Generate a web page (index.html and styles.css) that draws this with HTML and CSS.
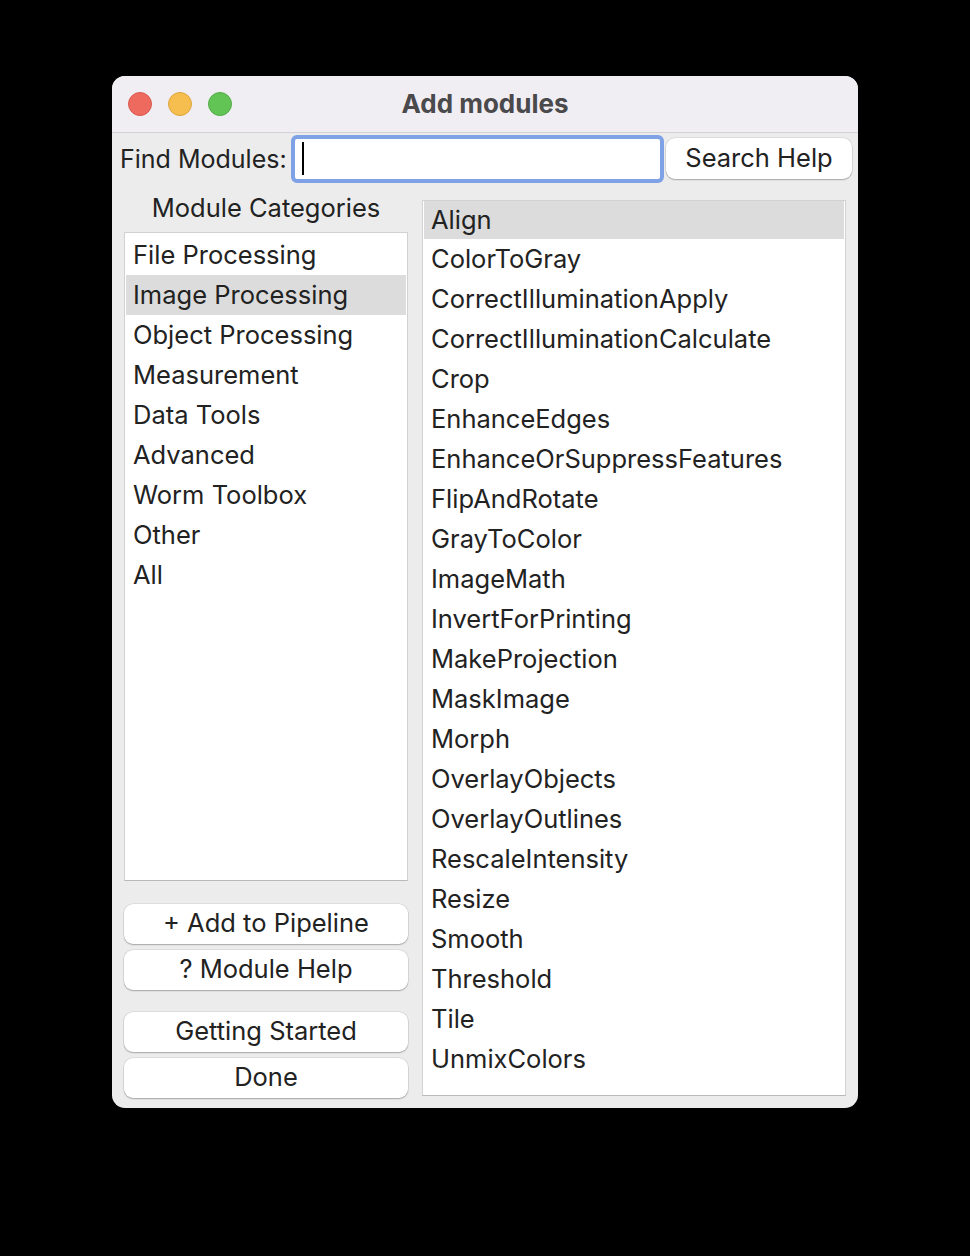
FILE: index.html
```html
<!DOCTYPE html>
<html>
<head>
<meta charset="utf-8">
<link rel="stylesheet" href="styles.css">
</head>
<body>
<div class="window">
  <div class="titlebar">
    <div class="lights">
      <span class="light red"></span>
      <span class="light yellow"></span>
      <span class="light green"></span>
    </div>
    <div class="title">Add modules</div>
    <div></div>
  </div>
  <div class="searchrow">
    <span class="label">Find Modules:</span>
    <div class="input"><span class="caret"></span></div>
    <button class="btn search">Search Help</button>
  </div>
  <div class="content">
    <div class="leftcol">
      <div class="heading">Module Categories</div>
      <ul class="list cats">
        <li>File Processing</li>
        <li class="sel">Image Processing</li>
        <li>Object Processing</li>
        <li>Measurement</li>
        <li>Data Tools</li>
        <li>Advanced</li>
        <li>Worm Toolbox</li>
        <li>Other</li>
        <li>All</li>
      </ul>
      <div class="btngroup first">
        <button class="btn">+ Add to Pipeline</button>
        <button class="btn">? Module Help</button>
      </div>
      <div class="btngroup">
        <button class="btn">Getting Started</button>
        <button class="btn">Done</button>
      </div>
    </div>
    <ul class="list mods">
      <li class="sel">Align</li>
      <li>ColorToGray</li>
      <li>CorrectIlluminationApply</li>
      <li>CorrectIlluminationCalculate</li>
      <li>Crop</li>
      <li>EnhanceEdges</li>
      <li>EnhanceOrSuppressFeatures</li>
      <li>FlipAndRotate</li>
      <li>GrayToColor</li>
      <li>ImageMath</li>
      <li>InvertForPrinting</li>
      <li>MakeProjection</li>
      <li>MaskImage</li>
      <li>Morph</li>
      <li>OverlayObjects</li>
      <li>OverlayOutlines</li>
      <li>RescaleIntensity</li>
      <li>Resize</li>
      <li>Smooth</li>
      <li>Threshold</li>
      <li>Tile</li>
      <li>UnmixColors</li>
    </ul>
  </div>
</div>
</body>
</html>
```

FILE: styles.css
```css
* { box-sizing: border-box; }
html, body { margin: 0; padding: 0; background: #000; }
body {
  width: 970px;
  height: 1256px;
  padding: 76px 0 0 112px;
  font-family: Inter, "Noto Sans", "Liberation Sans", sans-serif;
  color: #222;
}
.window {
  width: 746px;
  height: 1032px;
  background: #ececec;
  border-radius: 13px;
  overflow: hidden;
  display: flex;
  flex-direction: column;
}
.titlebar {
  height: 57px;
  flex: none;
  background: #f1eef3;
  border-bottom: 1px solid #d3d1d5;
  display: grid;
  grid-template-columns: 1fr auto 1fr;
  align-items: center;
}
.lights {
  display: flex;
  gap: 16px;
  padding-left: 16px;
}
.light {
  width: 24px;
  height: 24px;
  border-radius: 50%;
  display: block;
}
.red { background: #ee6a5f; border: 1px solid #d85a50; }
.yellow { background: #f5be4f; border: 1px solid #dca53f; }
.green { background: #61c454; border: 1px solid #52ad46; }
.title {
  font-size: 26px;
  font-weight: 700;
  color: #4a494c;
  margin-top: -2px;
}
.searchrow {
  display: flex;
  align-items: center;
  height: 51px;
  padding-left: 8px;
  flex: none;
}
.label {
  font-size: 25px;
  color: #222;
  width: 171px;
}
.input {
  width: 373px;
  height: 48px;
  background: #fff;
  border: 4px solid #7fa2e6;
  border-radius: 6px;
  display: flex;
  align-items: center;
  padding-left: 7px;
}
.caret {
  width: 2px;
  height: 33px;
  background: #000;
  display: block;
}
.btn {
  font-family: inherit;
  font-size: 25.5px;
  color: #222;
  background: #fff;
  border: none;
  border-radius: 9px;
  box-shadow: 0 1px 1.5px rgba(0,0,0,0.25), 0 0 0 0.5px rgba(0,0,0,0.12);
  height: 40px;
  padding: 0 0 3px 0;
  cursor: default;
}
.search {
  width: 186px;
  height: 41px;
  margin-left: 2px;
}
.content {
  display: flex;
  gap: 14px;
  padding: 13px 12px 0 12px;
  flex: 1;
}
.leftcol {
  width: 284px;
  display: flex;
  flex-direction: column;
}
.heading {
  text-align: center;
  font-size: 25.5px;
  height: 35px;
  line-height: 22px;
  color: #222;
}
.list {
  list-style: none;
  margin: 0;
  padding: 1px;
  background: #fff;
  border: 1px solid #d2d2d2;
  border-bottom-color: #b9b9b9;
  font-size: 25.5px;
  color: #222;
}
.list li {
  height: 40px;
  line-height: 40px;
  padding-left: 7px;
  white-space: nowrap;
}
.list li.sel { background: #dcdcdc; }
.cats {
  height: 649px;
  padding-top: 2px;
}
.mods {
  width: 424px;
  height: 896px;
  margin-top: 3px;
  padding-top: 0;
}
.mods li:first-child { height: 38px; line-height: 37px; }
.btngroup {
  display: flex;
  flex-direction: column;
  gap: 6px;
}
.btngroup.first { margin-top: 23px; margin-bottom: 22px; }
```
